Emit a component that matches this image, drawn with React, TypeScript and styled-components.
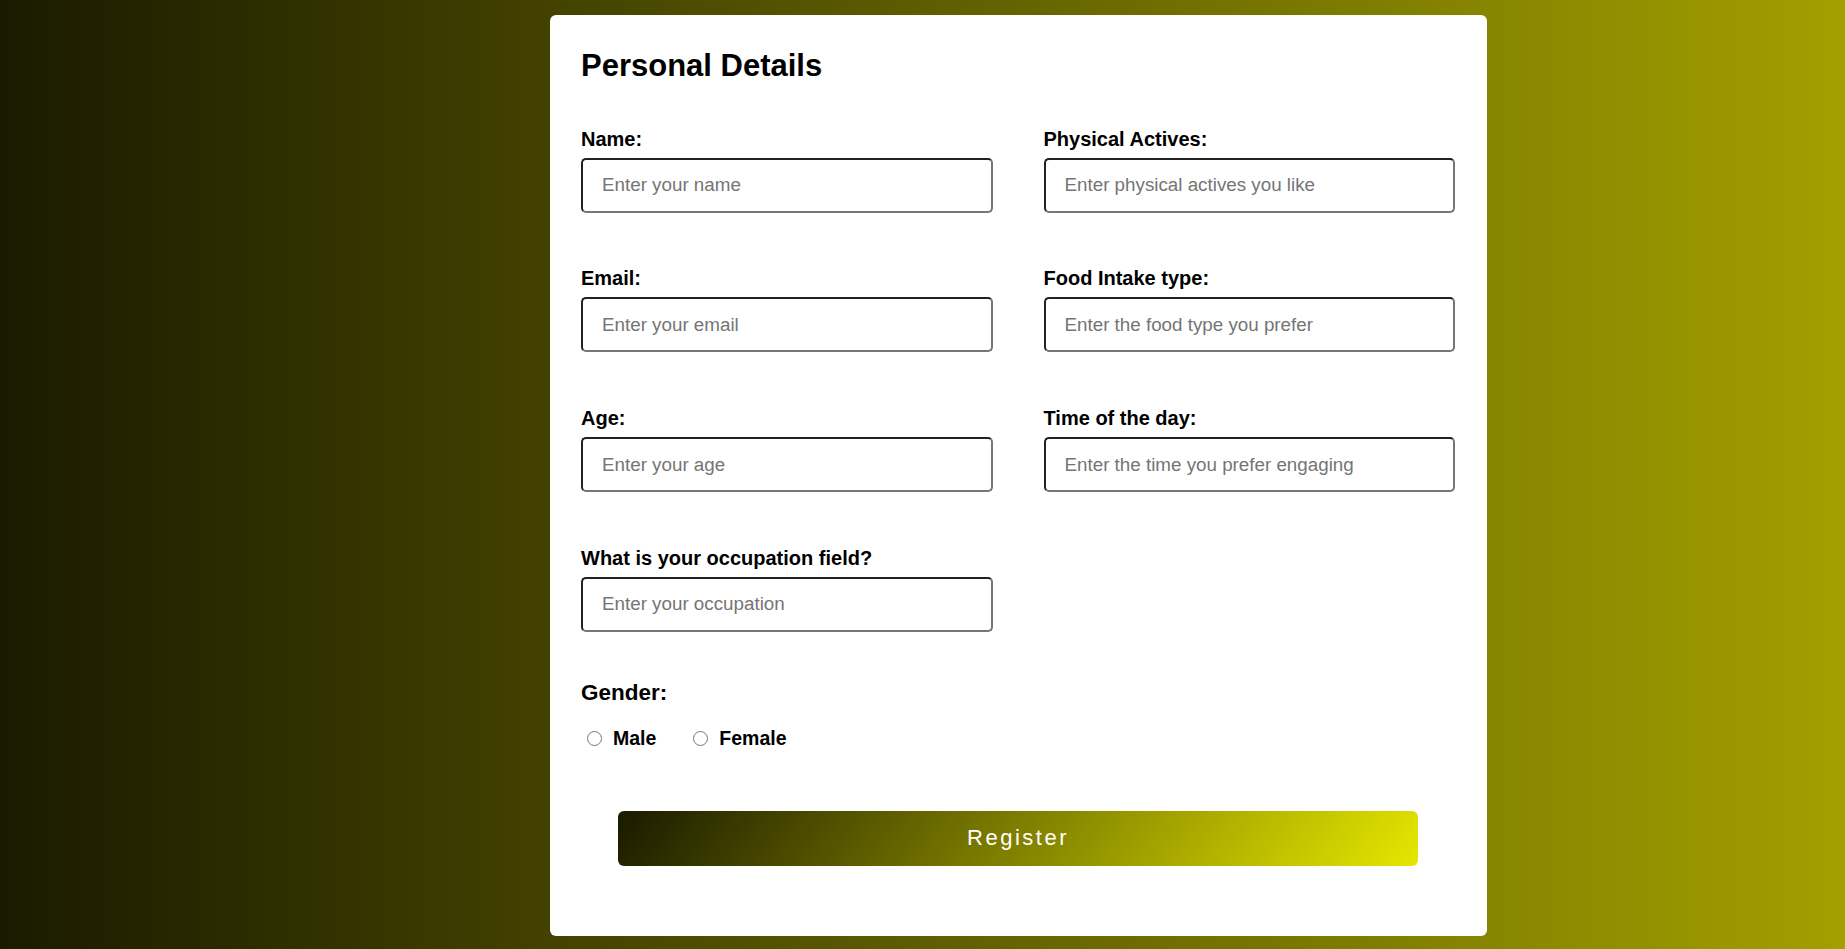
import * as React from 'react';
import styled, {createGlobalStyle} from "styled-components";

const GlobalStyle = createGlobalStyle`
  * {
    box-sizing: border-box;
  }

  html, body {
    margin: 0;
    padding: 0;
  }

  body {
    font-family: "Liberation Sans", Arial, Helvetica, sans-serif;
    background: linear-gradient(to right, #1a1a00, #a29f00);
    min-height: 100vh;
  }
`

type Field = {
	id: string
	label: string
	placeholder: string
}

const fields: Field[] = [
	{id: 'name', label: 'Name:', placeholder: 'Enter your name'},
	{id: 'activities', label: 'Physical Actives:', placeholder: 'Enter physical actives you like'},
	{id: 'email', label: 'Email:', placeholder: 'Enter your email'},
	{id: 'food', label: 'Food Intake type:', placeholder: 'Enter the food type you prefer'},
	{id: 'age', label: 'Age:', placeholder: 'Enter your age'},
	{id: 'time', label: 'Time of the day:', placeholder: 'Enter the time you prefer engaging'},
	{id: 'occupation', label: 'What is your occupation field?', placeholder: 'Enter your occupation'},
]

export default function App() {
	const [gender, setGender] = React.useState<string>('')

	return (
		<>
			<GlobalStyle/>
			<Page>
				<Card onSubmit={(e) => e.preventDefault()}>
					<Title>Personal Details</Title>
					<FieldsGrid>
						{fields.map(field => (
							<FieldGroup key={field.id}>
								<FieldLabel htmlFor={field.id}>{field.label}</FieldLabel>
								<TextInput id={field.id} type="text" placeholder={field.placeholder}/>
							</FieldGroup>
						))}
					</FieldsGrid>

					<GenderSection>
						<GenderTitle>Gender:</GenderTitle>
						<RadioRow>
							{['Male', 'Female'].map(option => (
								<RadioOption key={option}>
									<Radio
										type="radio"
										name="gender"
										value={option}
										checked={gender === option}
										onChange={() => setGender(option)}
									/>
									{option}
								</RadioOption>
							))}
						</RadioRow>
					</GenderSection>

					<RegisterButton type="submit">Register</RegisterButton>
				</Card>
			</Page>
		</>
	)
}

const Page = styled.div`
  min-height: 100vh;
  display: flex;
  align-items: flex-start;
  padding: 15px 0 14px 550px;
`

const Card = styled.form`
  width: 937px;
  background: #ffffff;
  border-radius: 6px;
  padding: 33px 32px 70px 31px;
  display: flex;
  flex-direction: column;
`

const Title = styled.h2`
  margin: 0 0 43.5px;
  font-size: 31px;
  font-weight: 700;
  color: #000;
`

const FieldsGrid = styled.div`
  display: grid;
  grid-template-columns: 1fr 1fr;
  column-gap: 51px;
  row-gap: 54.8px;
`

const FieldGroup = styled.div`
  display: flex;
  flex-direction: column;
`

const FieldLabel = styled.label`
  font-size: 20px;
  font-weight: 700;
  color: #000;
  margin-bottom: 7px;
`

const TextInput = styled.input`
  height: 55px;
  width: 100%;
  padding: 0 19px;
  font-family: "Liberation Sans", Arial, sans-serif;
  font-size: 18.8px;
  color: #000;
  border: 2px inset #767676;
  border-radius: 5px;
  background: #fff;
  outline: none;

  &::placeholder {
    color: #757575;
  }
`

const GenderSection = styled.div`
  margin-top: 48.5px;
  display: flex;
  flex-direction: column;
  gap: 20.5px;
`

const GenderTitle = styled.h3`
  margin: 0;
  font-size: 22.5px;
  font-weight: 700;
  color: #000;
`

const RadioRow = styled.div`
  display: flex;
  align-items: center;
`

const RadioOption = styled.label`
  display: flex;
  align-items: center;
  font-size: 19.5px;
  font-weight: 700;
  color: #000;
  margin-right: 31px;
  cursor: pointer;
`

const Radio = styled.input`
  width: 15px;
  height: 15px;
  margin: 0 11px 0 6px;
  cursor: pointer;
`

const RegisterButton = styled.button`
  align-self: center;
  width: 800px;
  height: 55px;
  margin-top: 61px;
  border: none;
  border-radius: 6px;
  background: linear-gradient(125deg, #1a1a00 0%, #e6e600 100%);
  color: #fff;
  font-family: "Liberation Sans", Arial, sans-serif;
  font-size: 22px;
  letter-spacing: 2.5px;
  cursor: pointer;
`
